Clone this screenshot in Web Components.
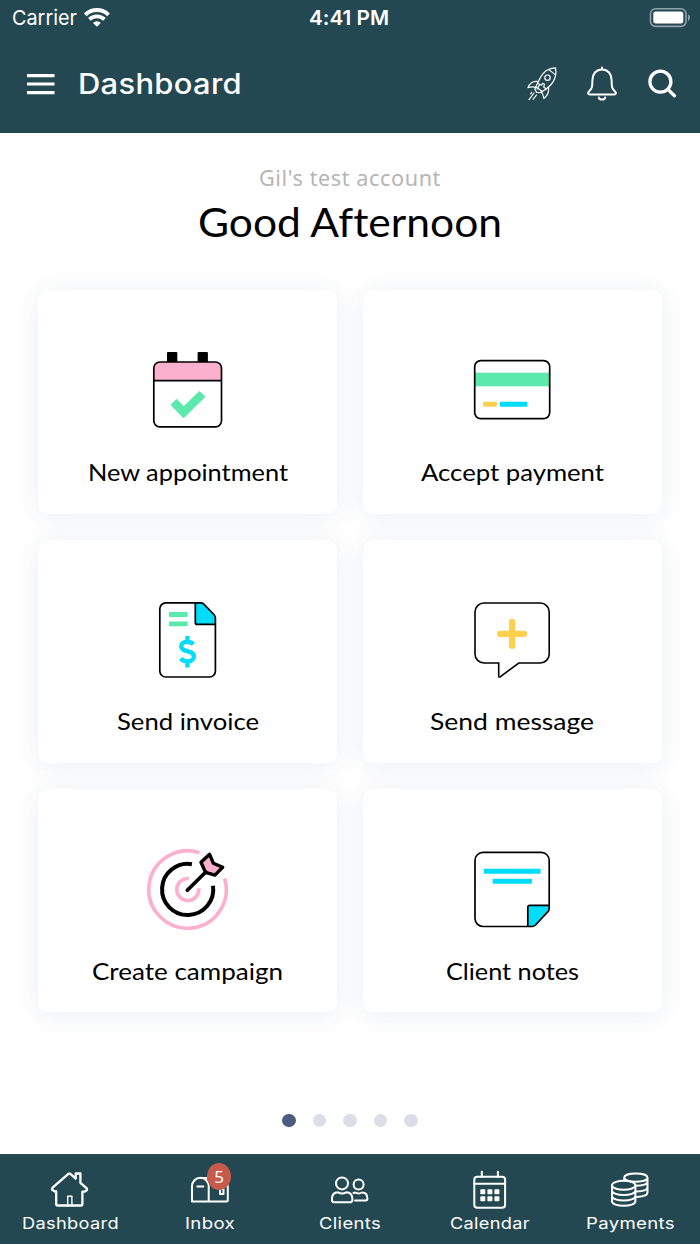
<!DOCTYPE html>
<html lang="en">
<head>
<meta charset="utf-8">
<title>Dashboard</title>
<style>
  body {
    margin: 0;
    background: #fff;
    font-family: Inter, "Liberation Sans", sans-serif;
  }
</style>
</head>
<body>
<dashboard-app></dashboard-app>

<script>
const ICONS = {
  appointment: `
    <g transform="translate(-.6 0)">
      <rect x="24.600" y="7" width="10.300" height="12" rx="1"/>
      <rect x="55.200" y="7" width="10.300" height="12" rx="1"/>
      <path d="M11.400 35.300V23a6 6 0 0 1 6-6H73a6 6 0 0 1 6 6v12.300z" fill="#fbb1cd"/>
      <rect x="11.400" y="17" width="67.700" height="64.800" rx="6" fill="none" stroke="#000" stroke-width="1.700"/>
      <path d="M11.400 35.600H79" stroke="#000" stroke-width="1.700"/>
      <path d="M29.200 60l5-5.200 7 7.500L57 47l5 4.800L41.200 72.300z" fill="#5be9ae" stroke="#5be9ae" stroke-width="1.600" stroke-linejoin="round"/>
    </g>`,
  payment: `
    <rect x="7.700" y="27.700" width="75" height="13.600" fill="#5be9ae"/>
    <rect x="7.700" y="15.600" width="75" height="58" rx="6" fill="none" stroke="#000" stroke-width="1.700"/>
    <rect x="16.100" y="56.700" width="13.800" height="5" rx="1" fill="#ffd04d"/>
    <rect x="32.900" y="56.700" width="27.500" height="5" rx="1" fill="#00dcfa"/>`,
  invoice: `
    <g transform="translate(-.6 0)">
      <path d="M52.900 7.900h5.500q1.800 0 3 1.200L71.500 19.500q1.500 1.500 1.500 3.500v6.400H55q-2.100 0-2.100-2z" fill="#00dcfa"/>
      <path d="M23.400 7.900h35q1.800 0 3 1.200L71.500 19.500q1.500 1.500 1.500 3.500V76a6 6 0 0 1-6 6H23.400a6 6 0 0 1-6-6V13.900a6 6 0 0 1 6-6zM52.900 7.900v19.500q0 2 2.100 2h18" fill="none" stroke="#000" stroke-width="1.700"/>
      <rect x="26.500" y="17.100" width="18.800" height="4.800" rx=".8" fill="#5be9ae"/>
      <rect x="26.500" y="26.400" width="18.800" height="4.800" rx=".8" fill="#5be9ae"/>
      <path d="M51 49.300c-2-2-4-2.600-6.200-2.600-3.600 0-6 1.900-6 4.600 0 6.400 12.700 3.400 12.700 10.200 0 3-2.600 5-6.300 5-2.800 0-5-1-6.900-3.100M45 41v5M45 67v5.400" fill="none" stroke="#00dcfa" stroke-width="4.400" stroke-linejoin="round"/>
    </g>`,
  message: `
    <path d="M17 8h56.200a9 9 0 0 1 9 9v42a9 9 0 0 1-9 9H51.800L33.500 81.700q-1.800 1-1.800-1V68H17a9 9 0 0 1-9-9V17a9 9 0 0 1 9-9z" fill="none" stroke="#000" stroke-width="1.600"/>
    <path d="M45.100 26.800v24M33.100 38.800h24" stroke="#ffd04d" stroke-width="6.300" stroke-linecap="round"/>`,
  campaign: `
    <g fill="none" stroke-width="3.700">
      <path d="M56.500 8.700A38.700 38.700 0 1 0 81.600 34.400" stroke="#fbb1cd"/>
      <path d="M48.900 20.200A25.600 25.600 0 1 0 70 41.800" stroke="#000" stroke-width="4"/>
      <path d="M46 34.600A11 11 0 1 0 55.700 44.300" stroke="#fbb1cd"/>
    </g>
    <path d="M66.600 10.300l3.700 8.900 9.400 4-7.800 7.900-9.400-2.700-4.500-10.100z" fill="#fbb1cd" stroke="#000" stroke-width="3.400" stroke-linejoin="round"/>
    <path d="M44.300 46.300L62.800 28" stroke="#000" stroke-width="3.700" stroke-linecap="round"/>`,
  notes: `
    <path d="M60.800 82.500V63.300q0-2 2-2h19.400v3.200q0 2-1.500 3.300L68.500 81q-1.500 1.500-3.500 1.500z" fill="#00dcfa"/>
    <path d="M16 8.400h58.200a8 8 0 0 1 8 8v48.100q0 2-1.500 3.300L68.500 81q-1.500 1.500-3.500 1.500H16a8 8 0 0 1-8-8V16.400a8 8 0 0 1 8-8zM60.800 82.500V63.300q0-2 2-2h19.400" fill="none" stroke="#000" stroke-width="1.700"/>
    <rect x="16.800" y="24.800" width="56.800" height="5" rx=".8" fill="#00dcfa"/>
    <rect x="25.600" y="34.700" width="39.300" height="5" rx=".8" fill="#00dcfa"/>`
};

const TAB_ICONS = {
  home: `
    <path d="M8.200 23.400H6.500L4 21.500 4.600 19.700 20.600 5.600h1.500l5.600 5V5.500h4.700v9.300l6.400 5.600.2 1.600-2.300 1.600h-2.300v12.500q0 1.400-1.400 1.400H9.600q-1.400 0-1.400-1.400z" stroke-width="2.300"/>
    <path d="M19.700 37.500v-9.300h4.200v9.300" stroke-width="1.400"/>`,
  inbox: `
    <path d="M4 33.500V18.500a8.300 8.700 0 0 1 16.700 0v15zM12.300 9.900h19a8.500 8.500 0 0 1 8.500 8.500v13.600q0 1.500-1.500 1.500H20.700M9.300 18.400h6M32 18v8h3.500v-5H32"/>`,
  clients: `
    <circle cx="14" cy="15.400" r="6"/>
    <circle cx="30.600" cy="16.500" r="5"/>
    <path d="M3.900 31.500c0-4.800 2-7.200 6.200-7.200 2.500 1.400 5.500 1.400 8 0 4.200 0 6.300 2.400 6.300 7.200 0 1.900-.5 2.800-2 2.800H5.900c-1.500 0-2-.9-2-2.800zM25.500 25l1.800-.5c2 1.200 4.600 1.200 6.700 0 3.800 0 5.400 2.100 5.400 6 0 1.500-.4 2-1.700 2H27"/>`,
  calendar: `
    <rect x="6.300" y="8.700" width="30.800" height="31" rx="3"/>
    <path d="M6.300 15.700h30.800M13.800 3.800v5M29.900 3.800v5"/>
    <g fill="#fff" stroke="none">
      <rect x="12.300" y="21.200" width="5" height="5" rx=".7"/><rect x="19.400" y="21.200" width="5" height="5" rx=".7"/><rect x="26.400" y="21.200" width="5" height="5" rx=".7"/>
      <rect x="12.300" y="28.200" width="5" height="5" rx=".7"/><rect x="19.400" y="28.200" width="5" height="5" rx=".7"/><rect x="26.400" y="28.200" width="5" height="5" rx=".7"/>
    </g>`,
  payments: `
    <ellipse cx="15.700" cy="17.300" rx="11.700" ry="4.500"/>
    <path d="M4 17.300v16c0 6 23.400 6 23.400 0v-16M4 22.500c0 6 23.400 6 23.400 0M4 28c0 6 23.400 6 23.400 0M16.200 12.500V9.600c0-5.600 23.300-5.600 23.300 0v15c0 2.200-4 4-10.500 4.400M16.200 9.600c0 5.600 23.300 5.600 23.300 0M28.500 17.800c6.800-.2 11-1.900 11-4.200M28.500 23.500c6.800-.2 11-1.900 11-4.200"/>`
};

// One line of text set to a given width in pixels.
class FitText extends HTMLElement {
  constructor() {
    super();
    this.attachShadow({mode: "open"}).innerHTML = `
      <style>
        :host { display: inline-block; white-space: nowrap; text-align: left; font-variant-ligatures: none; }
        span { display: inline-block; transform-origin: 0 50%; }
      </style>
      <span><slot></slot></span>`;
  }

  connectedCallback() {
    const span = this.shadowRoot.querySelector("span");
    const width = Number(this.getAttribute("width"));
    const natural = span.getBoundingClientRect().width;
    this.style.width = `${width}px`;
    span.style.transform = `scaleX(${width / natural})`;
  }
}

class StatusBar extends HTMLElement {
  constructor() {
    super();
    this.attachShadow({mode: "open"}).innerHTML = `
      <style>
        :host {
          display: grid;
          grid-template-columns: 1fr auto 1fr;
          align-items: center;
          height: 35px;
          padding: 0 9px 0 12px;
          box-sizing: border-box;
          color: #fff;
          font-size: 20.500px;
          line-height: 35px;
        }
        .carrier { display: flex; align-items: center; gap: 7px; }
        .time { margin-right: 5px; font-weight: 600; }
        .battery { justify-self: end; }
        svg { display: block; }
      </style>
      <div class="carrier">
        <fit-text width="65">Carrier</fit-text>
        <svg width="26" height="20" viewBox="0 0 26 20" fill="none" stroke="#fff" stroke-width="3.900">
          <path d="M1.300 6.800a16.500 16.500 0 0 1 23.200 0M5.400 11.400a10.800 10.800 0 0 1 15 0"/>
          <path d="M12.900 18.800L9 14.900a5.600 5.600 0 0 1 7.800 0z" fill="#fff" stroke="none"/>
        </svg>
      </div>
      <fit-text class="time" width="80">4:41 PM</fit-text>
      <svg class="battery" width="42" height="20" viewBox="0 0 42 20">
        <rect x="1.500" y=".8" width="35.500" height="17.600" rx="5" fill="none" stroke="#8fa2a8" stroke-width="1.600"/>
        <rect x="4.300" y="3.600" width="30" height="12" rx="2.500" fill="#fff"/>
        <path d="M39 6.300q2 1 2 3.300t-2 3.300z" fill="#8fa2a8"/>
      </svg>`;
  }
}

class TopBar extends HTMLElement {
  constructor() {
    super();
    this.attachShadow({mode: "open"}).innerHTML = `
      <style>
        :host {
          display: flex;
          align-items: center;
          height: 98px;
          padding: 0 22px 0 27px;
          box-sizing: border-box;
          color: #fff;
        }
        h1 {
          flex: 1;
          margin: 0 0 0 23px;
          font-size: 28px;
          font-weight: 550;
          line-height: 34px;
          letter-spacing: .3px;
        }
        .actions { display: flex; align-items: center; gap: 28px; }
        svg { display: block; fill: none; stroke: #fff; stroke-linecap: round; stroke-linejoin: round; }
      </style>
      <svg width="28" height="22" viewBox="0 0 28 22" stroke-width="3.200" style="stroke-linecap: butt">
        <path d="M0 2.600h27.500M0 11h27.500M0 19.700h27.500"/>
      </svg>
      <h1><fit-text width="164"><slot></slot></fit-text></h1>
      <div class="actions">
        <svg width="32" height="36" viewBox="0 0 32 36" stroke-width="1.200">
          <path d="M29.500 1.800c-5 .2-9.400 2-12.600 6-2.800 3.500-4.900 8-7 13l6.300 4.800c4.500-2.800 8.600-6 11-10 2.400-4 3.200-9 2.300-13.800zM22.900 3.600l6.200 5"/>
          <circle cx="21.500" cy="11.700" r="2.700"/>
          <path d="M12.200 15.500c-5-.8-8.300 1-10.200 6.200 3.200-1.200 5.200-1.200 7.600-.2M22.500 20.500c.8 5.200-.8 9-4.600 12-.6-3.200-1.200-5-2.800-6.800M11.700 17.200l3.800 2 1.200-2 1.700 1-.6 3 2.700 1.700M9.900 20.800l-1 2.700 1.800 2.900 2.700.3 2.800-1.100M13.500 19l-2.400 4M8 27l-5 6.700M5.800 26.300l-1.200 1.500M10.500 29l-3.500 4.400"/>
        </svg>
        <svg width="32" height="36" viewBox="0 0 32 36" stroke-width="2">
          <path d="M16 1.500v2M16 3.500c-6 0-9.600 4.500-9.600 10.500 0 7.500-.6 9-3.200 11.200-1.800 1.600-1.300 3.200.8 3.200h24c2.100 0 2.600-1.600.8-3.200-2.600-2.200-3.200-3.700-3.200-11.200 0-6-3.600-10.500-9.600-10.500zM12.800 31.500c.6 2.800 5.800 2.800 6.400 0"/>
        </svg>
        <svg width="32" height="36" viewBox="0 0 32 36" stroke-width="3.300">
          <circle cx="14.400" cy="15.700" r="10.500"/><path d="M22 23.500l6.500 6.200"/>
        </svg>
      </div>`;
  }
}

class ActionCard extends HTMLElement {
  constructor() {
    super();
    this.attachShadow({mode: "open"});
  }

  connectedCallback() {
    this.shadowRoot.innerHTML = `
      <style>
        :host {
          display: flex;
          flex-direction: column;
          align-items: center;
          padding-top: 55px;
          box-sizing: border-box;
          border-radius: 10px;
          background: #fff;
          box-shadow: 0 3px 26px rgba(40, 65, 115, .09);
          color: #000;
          font: 24px/32px Lato, sans-serif;
        }
        svg { display: block; margin-bottom: 20.600px; }
      </style>
      <svg width="90" height="90" viewBox="0 0 90 90">${ICONS[this.getAttribute("icon")]}</svg>
      <fit-text width="${this.getAttribute("label-width")}"><slot></slot></fit-text>`;
  }
}

class PageDots extends HTMLElement {
  constructor() {
    super();
    this.attachShadow({mode: "open"}).innerHTML = `
      <style>
        :host { display: flex; justify-content: center; gap: 16.800px; }
        i { width: 13.600px; height: 13.600px; border-radius: 50%; background: #dbdee6; }
        i.active { background: #4b5c80; }
      </style>
      <i class="active"></i><i></i><i></i><i></i><i></i>`;
  }
}

class TabItem extends HTMLElement {
  constructor() {
    super();
    this.attachShadow({mode: "open"});
  }

  connectedCallback() {
    const badge = this.getAttribute("badge");
    this.shadowRoot.innerHTML = `
      <style>
        :host {
          display: flex;
          flex: 1;
          flex-direction: column;
          align-items: center;
          padding-top: 14px;
          color: #fff;
          font-size: 16px;
          line-height: 20px;
          letter-spacing: .3px;
        }
        .icon { position: relative; height: 44px; margin-bottom: 1px; }
        svg { display: block; fill: none; stroke: #fff; stroke-width: 2; stroke-linecap: round; stroke-linejoin: round; }
        .badge {
          position: absolute;
          left: 19px;
          top: -5px;
          width: 24px;
          height: 27px;
          border-radius: 50%;
          background: #c75b4b;
          font: 17px/27px "Noto Sans", sans-serif;
          letter-spacing: 0;
          text-align: center;
        }
      </style>
      <div class="icon">
        <svg width="44" height="44" viewBox="0 0 44 44">${TAB_ICONS[this.getAttribute("icon")]}</svg>
        ${badge ? `<span class="badge">${badge}</span>` : ""}
      </div>
      <fit-text width="${this.getAttribute("label-width")}"><slot></slot></fit-text>`;
  }
}

class DashboardApp extends HTMLElement {
  constructor() {
    super();
    this.attachShadow({mode: "open"}).innerHTML = `
      <style>
        :host { display: flex; flex-direction: column; height: 1244px; overflow: hidden; }
        header, nav { background: #234852; }
        header { height: 133.400px; }
        main { flex: 1; display: flex; flex-direction: column; }
        .greeting { height: 156.800px; box-sizing: border-box; padding-top: 28px; text-align: center; }
        .greeting p { margin: 0; color: #b5b5b5; font: 22px/32px "Noto Sans", sans-serif; letter-spacing: .6px; }
        .greeting h2 { margin: 5px 0 0; color: #000; font: 40px/48px Lato, sans-serif; }
        .cards {
          display: grid;
          grid-template-columns: 1fr 1fr;
          grid-auto-rows: 223.400px;
          gap: 26px 25.600px;
          padding: 0 38.400px;
        }
        page-dots { margin-top: 101.400px; }
        nav { display: flex; height: 89.800px; }
      </style>
      <header>
        <status-bar></status-bar>
        <top-bar>Dashboard</top-bar>
      </header>
      <main>
        <div class="greeting">
          <p><fit-text width="182">Gil's test account</fit-text></p>
          <h2><fit-text width="304">Good Afternoon</fit-text></h2>
        </div>
        <div class="cards">
          <action-card icon="appointment" label-width="200">New appointment</action-card>
          <action-card icon="payment" label-width="183">Accept payment</action-card>
          <action-card icon="invoice" label-width="142">Send invoice</action-card>
          <action-card icon="message" label-width="164">Send message</action-card>
          <action-card icon="campaign" label-width="191">Create campaign</action-card>
          <action-card icon="notes" label-width="133">Client notes</action-card>
        </div>
        <page-dots></page-dots>
      </main>
      <nav>
        <tab-item icon="home" label-width="97">Dashboard</tab-item>
        <tab-item icon="inbox" label-width="50" badge="5">Inbox</tab-item>
        <tab-item icon="clients" label-width="62">Clients</tab-item>
        <tab-item icon="calendar" label-width="80">Calendar</tab-item>
        <tab-item icon="payments" label-width="89">Payments</tab-item>
      </nav>`;
  }
}

customElements.define("fit-text", FitText);
customElements.define("status-bar", StatusBar);
customElements.define("top-bar", TopBar);
customElements.define("action-card", ActionCard);
customElements.define("page-dots", PageDots);
customElements.define("tab-item", TabItem);
customElements.define("dashboard-app", DashboardApp);
</script>
</body>
</html>
